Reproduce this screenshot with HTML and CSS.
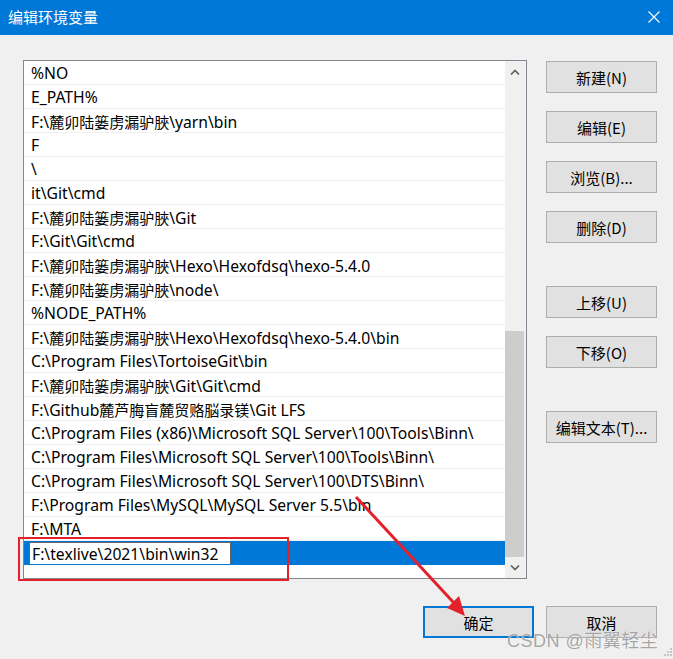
FILE: index.html
```html
<!DOCTYPE html>
<html lang="zh-CN">
<head>
<meta charset="utf-8">
<title>编辑环境变量</title>
<link rel="stylesheet" href="styles.css">
</head>
<body>
<div class="window">
  <div class="titlebar">
    <span class="title">编辑环境变量</span>
    <svg class="close" width="12" height="12" viewBox="0 0 12 12"><path d="M0.5 0.5 L11.5 11.5 M11.5 0.5 L0.5 11.5" stroke="#fff" stroke-width="1.1" fill="none"/></svg>
  </div>
  <div class="main">
    <div class="listbox">
      <div class="rows">
        <div class="row">%NO</div>
        <div class="row">E_PATH%</div>
        <div class="row">F:\<span class="cj">麓卯陆篓虏漏驴脥</span>\yarn\bin</div>
        <div class="row">F</div>
        <div class="row">\</div>
        <div class="row">it\Git\cmd</div>
        <div class="row">F:\<span class="cj">麓卯陆篓虏漏驴脥</span>\Git</div>
        <div class="row">F:\Git\Git\cmd</div>
        <div class="row">F:\<span class="cj">麓卯陆篓虏漏驴脥</span>\Hexo\Hexofdsq\hexo-5.4.0</div>
        <div class="row">F:\<span class="cj">麓卯陆篓虏漏驴脥</span>\node\</div>
        <div class="row">%NODE_PATH%</div>
        <div class="row">F:\<span class="cj">麓卯陆篓虏漏驴脥</span>\Hexo\Hexofdsq\hexo-5.4.0\bin</div>
        <div class="row">C:\Program Files\TortoiseGit\bin</div>
        <div class="row">F:\<span class="cj">麓卯陆篓虏漏驴脥</span>\Git\Git\cmd</div>
        <div class="row">F:\Github<span class="cj">麓芦脢盲麓贸赂脳录镁</span>\Git LFS</div>
        <div class="row">C:\Program Files (x86)\Microsoft SQL Server\100\Tools\Binn\</div>
        <div class="row">C:\Program Files\Microsoft SQL Server\100\Tools\Binn\</div>
        <div class="row">C:\Program Files\Microsoft SQL Server\100\DTS\Binn\</div>
        <div class="row">F:\Program Files\MySQL\MySQL Server 5.5\bin</div>
        <div class="row">F:\MTA</div>
        <div class="row selected"><span class="edit">F:\texlive\2021\bin\win32</span></div>
      </div>
      <div class="scrollbar">
        <div class="sb-btn"><svg width="10" height="6" viewBox="0 0 10 6"><path d="M1 5.5 L5 1.5 L9 5.5" stroke="#606060" stroke-width="1.6" fill="none"/></svg></div>
        <div class="sb-track"><div class="sb-thumb"></div></div>
        <div class="sb-btn"><svg width="10" height="6" viewBox="0 0 10 6"><path d="M1 0.5 L5 4.5 L9 0.5" stroke="#606060" stroke-width="1.6" fill="none"/></svg></div>
      </div>
    </div>
    <div class="side">
      <button class="btn">新建(N)</button>
      <button class="btn">编辑(E)</button>
      <button class="btn">浏览(B)...</button>
      <button class="btn">删除(D)</button>
      <button class="btn group">上移(U)</button>
      <button class="btn">下移(O)</button>
      <button class="btn group">编辑文本(T)...</button>
    </div>
  </div>
  <div class="footer">
    <button class="btn primary">确定</button>
    <button class="btn">取消</button>
  </div>
</div>
<svg class="annot" width="673" height="659" viewBox="0 0 673 659">
  <rect x="19" y="538" width="269" height="42" fill="none" stroke="#e4202a" stroke-width="2"/>
  <line x1="356" y1="497" x2="454" y2="603" stroke="#e4202a" stroke-width="3"/>
  <polygon points="465,616 447,608 459,596" fill="#e4202a"/>
  <g fill="#c4c4c4">
    <rect x="670" y="648" width="2" height="2"/>
    <rect x="667" y="651" width="2" height="2"/>
    <rect x="670" y="651" width="2" height="2"/>
    <rect x="664" y="654" width="2" height="2"/>
    <rect x="667" y="654" width="2" height="2"/>
    <rect x="670" y="654" width="2" height="2"/>
  </g>
</svg>
<div class="watermark">CSDN @雨翼轻尘</div>
</body>
</html>
```
FILE: styles.css
```css
* { box-sizing: border-box; }
html, body {
  margin: 0;
  padding: 0;
}
body {
  width: 673px;
  height: 659px;
  overflow: hidden;
  background: #f0f0f0;
  font-family: "Noto Sans", "Noto Sans CJK SC", sans-serif;
  position: relative;
}
.window {
  display: flex;
  flex-direction: column;
  height: 659px;
}
.titlebar {
  height: 35px;
  background: #0078d7;
  display: flex;
  align-items: center;
  justify-content: space-between;
  padding: 0 13px 1px 8px;
}
.title {
  color: #fff;
  font-family: "Noto Sans CJK SC", sans-serif;
  font-size: 15px;
  line-height: 16px;
}
.close { display: block; }
.main {
  display: flex;
  padding: 25px 0 0 23px;
}
.listbox {
  width: 504px;
  height: 519px;
  border: 1px solid #828790;
  background: #fff;
  display: flex;
  overflow: hidden;
}
.rows {
  width: 481px;
  display: flex;
  flex-direction: column;
}
.row {
  height: 24px;
  flex: none;
  border-bottom: 1px solid #f0f0f0;
  padding: 2px 0 0 7px;
  font-size: 15.7px;
  line-height: 21px;
  color: #000;
  white-space: nowrap;
  overflow: hidden;
}
.cj {
  font-family: "Noto Sans CJK SC", sans-serif;
  font-size: 15px;
}
.row.selected {
  background: #0078d7;
  border-bottom-color: #0078d7;
  padding: 0 0 0 5px;
  display: flex;
  align-items: stretch;
}
.edit {
  display: block;
  width: 202px;
  height: 24px;
  margin-top: 1px;
  background: #fff;
  border: 1px solid #646464;
  padding: 1px 0 0 2px;
  line-height: 20px;
  color: #000;
}
.scrollbar {
  width: 21px;
  background: #f0f0f0;
  display: flex;
  flex-direction: column;
}
.sb-btn {
  height: 21px;
  display: flex;
  align-items: center;
  justify-content: center;
  padding-right: 2px;
}
.sb-track {
  flex: 1;
  display: flex;
  flex-direction: column;
  justify-content: flex-end;
}
.sb-thumb {
  width: 19px;
  height: 226px;
  background: #cdcdcd;
}
.side {
  display: flex;
  flex-direction: column;
  gap: 18px;
  margin-left: 19px;
  padding-top: 1px;
}
.btn {
  width: 111px;
  height: 32px;
  background: #e1e1e1;
  border: 1px solid #adadad;
  font-family: "Noto Sans CJK SC", sans-serif;
  font-size: 15px;
  color: #000;
  padding: 0;
  margin: 0;
  line-height: 1;
}
.btn.group { margin-top: 25px; }
.btn.primary {
  border: 2px solid #0078d7;
}
.footer {
  display: flex;
  justify-content: flex-end;
  gap: 12px;
  padding: 27px 16px 0 0;
}
.annot {
  position: absolute;
  left: 0;
  top: 0;
  pointer-events: none;
}
.watermark {
  position: absolute;
  left: 507px;
  top: 626px;
  font-family: "Liberation Sans", "Noto Sans CJK SC", sans-serif;
  font-size: 18px;
  letter-spacing: 0.5px;
  color: rgba(150, 150, 150, 0.85);
  text-shadow: 0 0 1px rgba(255,255,255,0.9);
  white-space: nowrap;
}
```
